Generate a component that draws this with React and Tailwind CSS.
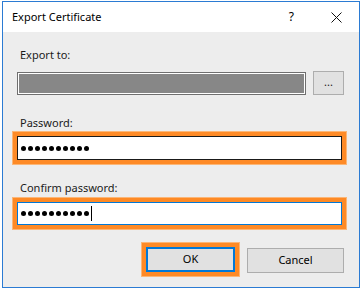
const font = { fontFamily: '"Segoe UI", "Noto Sans", "Open Sans", sans-serif' }

function Dots({ count }) {
  return (
    <div className="flex items-center gap-[2px]">
      {Array.from({ length: count }).map((_, i) => (
        <span key={i} className="block h-[5px] w-[5px] rounded-full bg-black" />
      ))}
    </div>
  )
}

function Highlight({ children, className = '' }) {
  return (
    <div className={`ml-[9px] w-[335px] border border-[#fbb677] bg-[#fe8a26] p-[4px] ${className}`}>
      {children}
    </div>
  )
}

export default function App() {
  return (
    <div className="h-[292px] w-[364px] overflow-hidden bg-white pt-[1px] text-[11px] text-[#1b1b1b]" style={font}>
      <div className="ml-[2px] flex h-[287px] w-[358px] flex-col border border-[#2b7bd3]">
        <div className="flex h-[30px] items-center bg-white pl-[9px]">
          <span className="text-[11px] text-black">Export Certificate</span>
          <span className="ml-auto mr-[37px] text-[12px] text-black">?</span>
          <svg width="11" height="11" viewBox="0 0 11 11" className="mr-[17px]">
            <path d="M0.5 0.5 L10.5 10.5 M10.5 0.5 L0.5 10.5" stroke="#111" strokeWidth="1" />
          </svg>
        </div>
        <div className="flex flex-1 flex-col bg-[#ededed]">
          <div className="ml-[17px] mt-[15px] h-[16px] leading-[16px]">Export to:</div>
          <div className="ml-[14px] mt-[8px] flex h-[24px] items-end">
            <div className="h-[23px] w-[289px] border border-[#6f6f6f] bg-white p-[1px]">
              <div className="h-full w-full bg-[#878787]" />
            </div>
            <button
              type="button"
              className="ml-[7px] flex h-[24px] w-[31px] items-center justify-center self-start border border-[#adadad] bg-[#e1e1e1] pb-[3px] text-[11px] leading-none text-[#222]"
            >
              ...
            </button>
          </div>
          <div className="ml-[17px] mt-[20px] h-[16px] leading-[16px]">Password:</div>
          <Highlight className="h-[34px]">
            <div className="flex h-[24px] items-center border border-[#1a1a1a] bg-white pl-[3px]">
              <Dots count={10} />
            </div>
          </Highlight>
          <div className="ml-[17px] mt-[15px] h-[16px] leading-[16px]">Confirm password:</div>
          <Highlight className="mt-[1px] h-[33px]">
            <div className="flex h-[23px] items-center border border-[#0078d7] bg-white pl-[3px]">
              <Dots count={10} />
              <span className="ml-[2px] block h-[15px] w-[1px] bg-black" />
            </div>
          </Highlight>
          <div className="mt-[12px] flex items-start">
            <div className="ml-[138px] h-[35px] w-[99px] border border-[#fbb677] bg-[#fe8a26] p-[4px]">
              <button
                type="button"
                className="flex h-[25px] w-[89px] items-center justify-center border-2 border-[#0078d7] bg-[#e1e1e1] text-[11px] text-black"
              >
                OK
              </button>
            </div>
            <button
              type="button"
              className="ml-[7px] mt-[6px] flex h-[25px] w-[97px] items-center justify-center border border-[#adadad] bg-[#e1e1e1] text-[11px] text-black"
            >
              Cancel
            </button>
          </div>
        </div>
      </div>
    </div>
  )
}
